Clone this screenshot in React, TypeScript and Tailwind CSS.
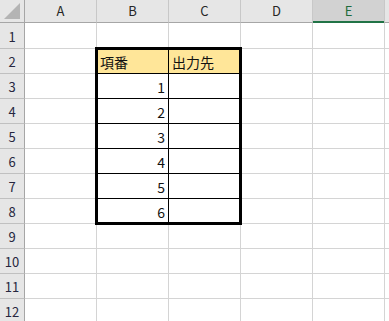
import React from "react";

const COLS = ["A", "B", "C", "D", "E", ""];
const ROWS = Array.from({ length: 12 }, (_, i) => i + 1);

const font = { fontFamily: '"Noto Sans CJK JP", "Noto Sans", sans-serif' };

function headerCell(label: string, idx: number) {
  const selected = label === "E";
  const last = idx === COLS.length - 1;
  return (
    <div
      key={"h" + idx}
      className={
        "relative flex items-center justify-center text-[13px] leading-none border-b border-b-[#a6a6a6] " +
        (last ? "" : "border-r border-r-[#c8c8c8] ") +
        (selected ? "bg-[#d2d2d2] text-[#1e6b3c]" : "bg-[#e6e6e6] text-[#262626]")
      }
    >
      <span className="-mt-[2px]">{label}</span>
      {selected && <div className="absolute left-0 right-0 bottom-[-1px] h-[2px] bg-[#217346]" />}
    </div>
  );
}

function bodyCell(row: number, colIdx: number) {
  const col = COLS[colIdx];
  const inTable = (col === "B" || col === "C") && row >= 2 && row <= 8;
  const isHead = inTable && row === 2;
  const isAnchor = col === "B" && row === 2;
  const last = colIdx === COLS.length - 1;
  let text: string | null = null;
  let align = "justify-start pl-[3px]";
  if (isHead) text = col === "B" ? "項番" : "出力先";
  else if (inTable && col === "B") {
    text = String(row - 2);
    align = "justify-end pr-[3px]";
  }
  const border = inTable
    ? "border-r border-b border-black"
    : (last ? "" : "border-r ") + "border-b border-[#d4d4d4]";
  return (
    <div
      key={"c" + row + "-" + colIdx}
      className={
        "relative flex items-end pb-[4px] text-[14px] leading-none text-[#111] " +
        align +
        " " +
        border +
        (isHead ? " bg-[#ffe699]" : " bg-white") +
        (isAnchor ? " z-10" : "")
      }
    >
      {text}
      {isAnchor && (
        <div className="absolute left-[-2px] top-[-2px] w-[147px] h-[178px] border-[3px] border-black pointer-events-none" />
      )}
    </div>
  );
}

export default function App() {
  return (
    <div className="w-[389px] h-[321px] overflow-hidden bg-white" style={font}>
      <div className="grid grid-cols-[25px_72px_72px_72px_72px_72px_1fr] grid-rows-[23px_26px_repeat(11,25px)]">
        <div className="bg-[#e6e6e6] border-r border-b border-r-[#a6a6a6] border-b-[#a6a6a6] relative">
          <svg className="absolute left-0 top-0" width="24" height="22" viewBox="0 0 24 22">
            <polygon points="20,3 20,19 4,19" fill="#b4b4b4" />
          </svg>
        </div>
        {COLS.map((c, i) => headerCell(c, i))}
        {ROWS.map((r) => (
          <React.Fragment key={"r" + r}>
            <div className="bg-[#e6e6e6] border-r border-r-[#a6a6a6] border-b border-b-[#c0c0c0] flex items-center justify-center text-[13px] leading-none text-[#262640]">
              <span className="mt-[1px]">{r}</span>
            </div>
            {COLS.map((_, ci) => bodyCell(r, ci))}
          </React.Fragment>
        ))}
      </div>
    </div>
  );
}
